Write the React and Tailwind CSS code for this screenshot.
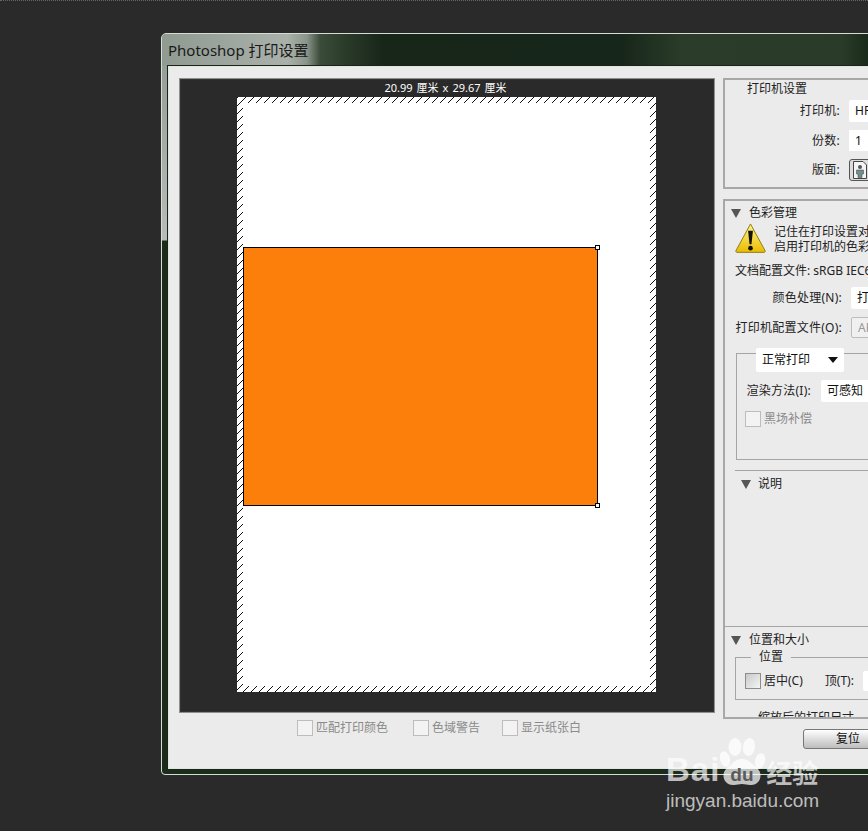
import React from 'react';

const Triangle = ({ className = '' }) => (
  <svg width="10" height="9" viewBox="0 0 10 9" className={className}>
    <path d="M0 0H10L5 9Z" fill="#555" />
  </svg>
);

const Checkbox = ({ label, muted, center }) => (
  <div className="flex items-center gap-[3px]">
    <span className={`h-4 w-4 border ${center ? 'border-[#8d8d8d] bg-gradient-to-br from-[#c9c9c9] to-[#f5f5f5]' : 'border-[#bdbdbd] bg-[#f3f3f3]'}`} />
    <span className={`text-[12px] leading-4 ${muted ? 'text-[#8a8a8a]' : 'text-[#222]'}`}>{label}</span>
  </div>
);

const Row = ({ label, labelWidth, children, className = '' }) => (
  <div className={`flex items-center ${className}`}>
    <span className="text-right text-[12px] tracking-[0.25px] text-[#222] shrink-0 whitespace-nowrap" style={{ width: labelWidth }}>{label}</span>
    {children}
  </div>
);

const Field = ({ children, className = '' }) => (
  <div className={`flex items-center bg-white rounded-[2px] px-[6px] text-[12px] text-[#111] whitespace-nowrap ${className}`}>{children}</div>
);

const WarningIcon = () => (
  <svg width="31" height="31" viewBox="0 0 32 32" className="shrink-0">
    <defs>
      <linearGradient id="warn" x1="0" y1="0" x2="0" y2="1">
        <stop offset="0" stopColor="#fff48a" />
        <stop offset="1" stopColor="#e9bc00" />
      </linearGradient>
    </defs>
    <path d="M16 1 31 28.5a1.2 1.2 0 0 1-1 1.8H2a1.2 1.2 0 0 1-1-1.8Z" fill="url(#warn)" stroke="#8f7a14" />
    <path d="M13.5 8h5l-1.5 14h-2Z" fill="#111" />
    <circle cx="16" cy="26" r="2.4" fill="#111" />
  </svg>
);

const PortraitIcon = () => (
  <svg width="14" height="18" viewBox="0 0 14 18">
    <path d="M.5.5H10L13.5 4V17.5H.5Z" fill="#f4f4f4" stroke="#444" />
    <circle cx="7" cy="6" r="2" fill="#555" />
    <path d="M3.5 9h7v4H9v3.5H5V13H3.5Z" fill="#6f8f8a" stroke="#444" strokeWidth=".5" />
  </svg>
);

const BaiduPaw = () => (
  <svg width="46" height="50" viewBox="0 0 46 50" fill="#fff" fillOpacity=".72">
    <ellipse cx="15" cy="10" rx="6.5" ry="9" />
    <ellipse cx="29" cy="10" rx="6" ry="9" transform="rotate(8 29 10)" />
    <ellipse cx="5" cy="22" rx="5" ry="8" transform="rotate(-15 5 22)" />
    <ellipse cx="40" cy="24" rx="5" ry="8" transform="rotate(15 40 24)" />
    <path d="M22 22c7 0 10 5 15 9 7 6 3 18-7 17-3 0-5-1-8-1s-5 1-8 1C4 49 0 37 7 31c5-4 8-9 15-9Z" />
  </svg>
);

export default function App() {
  return (
    <div className="relative h-[831px] w-[868px] overflow-hidden bg-[#2a2a2a] pl-[161px] pt-[33px] font-['Noto_Sans','Noto_Sans_CJK_SC',sans-serif]">
      <div className="absolute left-0 right-0 top-0 border-t border-dotted border-[#666]" />

      {/* dialog window, runs off the right edge of the shot */}
      <div className="h-[742px] w-[760px] rounded-tl-[5px] rounded-bl-[4px] border border-[#d5dcd5] bg-[linear-gradient(180deg,#8f9a91_0,#b8bcb8_206px,#1c2c1b_207px,#1c2c1b_100%)]">
        <div className="flex h-[32px] items-center rounded-tl-[4px] bg-[linear-gradient(90deg,#8f9a91_0,#aab1aa_125px,#8a958a_145px,#3c4c3a_158px,#2a3a28_185px,#18261a_220px,#17261a_460px,#2b3c2a_520px,#2b3b29_680px,#1a2a1a_706px)] pl-[6px] pt-[1px]">
          <span className="text-[15px] text-[#1a1a1a]">Photoshop 打印设置</span>
        </div>

        <div className="ml-[6px] h-[703px] border border-[#dfe6df] bg-[#ebebeb] outline outline-1 outline-[#1a241a]">
          <div className="flex pl-[10px] pt-[11px]">
            {/* preview */}
            <div className="w-[536px] shrink-0">
              <div className="h-[635px] border border-[#8e8e8e] bg-[#2a2a2a] outline outline-1 -outline-offset-2 outline-[#333]">
                <div className="flex h-[18px] items-center justify-center gap-[4px] pr-[3px] text-[11px] text-white">
                  <span>20.99</span><span>厘米</span><span>x</span><span>29.67</span><span>厘米</span>
                </div>
                <div className="ml-[57px] h-[595px] w-[419px] bg-[repeating-linear-gradient(135deg,#111_0,#111_1px,#fff_1px,#fff_5.66px)] p-[6px]">
                  <div className="h-full bg-white pt-[144px]">
                    <div className="relative h-[259px] w-[355px] border border-black bg-[#fb7f0a]">
                      <span className="absolute -right-[3px] -top-[3px] h-[5px] w-[5px] border border-black bg-white" />
                      <span className="absolute -bottom-[3px] -right-[3px] h-[5px] w-[5px] border border-black bg-white" />
                    </div>
                  </div>
                </div>
              </div>
              <div className="mt-[7px] flex pl-[118px]">
                <Checkbox label="匹配打印颜色" muted />
                <div className="ml-[25px]"><Checkbox label="色域警告" muted /></div>
                <div className="ml-[22px]"><Checkbox label="显示纸张白" muted /></div>
              </div>
            </div>

            {/* settings column */}
            <div className="ml-[8px] w-[200px] shrink-0">
              <div className="h-[111px] border-2 border-[#a8a8a8] border-r-0 pl-[22px] pt-[1px]">
                <div className="text-[12px] leading-[16px] text-[#222]">打印机设置</div>
                <div className="-ml-[22px] mt-[3px] flex flex-col gap-[8px]">
                  <Row label="打印机:" labelWidth={115}><Field className="ml-[9px] h-[22px] w-[120px]">HP LaserJet</Field></Row>
                  <Row label="份数:" labelWidth={115}><Field className="ml-[9px] h-[21px] w-[60px] !rounded-none">1</Field></Row>
                  <Row label="版面:" labelWidth={115}>
                    <div className="ml-[9px] flex h-[22px] w-[22px] items-center justify-center rounded-[3px] border border-[#555] bg-[#dcdcdc]"><PortraitIcon /></div>
                  </Row>
                </div>
              </div>

              <div className="mt-[10px] h-[520px] overflow-hidden border-2 border-[#a8a8a8] border-r-0">
                <div className="flex items-center pl-[6px] pt-[4px]">
                  <Triangle />
                  <span className="ml-[8px] text-[12px] leading-[16px] text-[#222]">色彩管理</span>
                </div>
                <div className="ml-[10px] mt-[2px] flex">
                  <WarningIcon />
                  <div className="ml-[8px] pt-[1px] text-[12px] leading-[15px] text-[#222] whitespace-nowrap">
                    <div>记住在打印设置对话框中</div>
                    <div>启用打印机的色彩管理</div>
                  </div>
                </div>
                <div className="ml-[10px] mt-[9px] text-[12px] leading-[16px] text-[#222] whitespace-nowrap">文档配置文件: sRGB IEC61966-2.1</div>
                <Row label="颜色处理(N):" labelWidth={117} className="mt-[8px]"><Field className="ml-[9px] h-[22px] w-[120px]">打印机管理颜色</Field></Row>
                <Row label="打印机配置文件(O):" labelWidth={117} className="mt-[8px]"><Field className="ml-[9px] h-[21px] w-[120px] border border-[#bdbdbd] !bg-[#f0f0f0] !text-[#999]">APPLE RGB</Field></Row>

                <div className="relative ml-[11px] mt-[15px] h-[107px] border border-[#a5a5a5] border-r-0 pl-[8px] pt-[26px]">
                  <Field className="absolute left-[19px] -top-[6px] h-[24px] w-[88px] justify-between !px-[6px]">
                    <span>正常打印</span>
                    <svg width="10" height="6" viewBox="0 0 10 6"><path d="M0 0H10L5 6Z" fill="#111" /></svg>
                  </Field>
                  <Row label="渲染方法(I):" labelWidth={66}><Field className="ml-[10px] h-[22px] w-[100px]">可感知</Field></Row>
                  <div className="mt-[9px]"><Checkbox label="黑场补偿" muted /></div>
                </div>

                <div className="ml-[10px] mt-[10px] h-[156px] border-t border-[#a5a5a5] pl-[6px] pt-[5px]">
                  <div className="flex items-center">
                    <Triangle />
                    <span className="ml-[7px] text-[12px] leading-[16px] text-[#222]">说明</span>
                  </div>
                </div>

                <div className="border-t border-[#a5a5a5] pl-[6px] pt-[5px]">
                  <div className="flex items-center">
                    <Triangle />
                    <span className="ml-[8px] text-[12px] leading-[16px] text-[#222]">位置和大小</span>
                  </div>
                </div>
                <div className="relative ml-[10px] mt-[9px] h-[43px] border border-[#a5a5a5] border-r-0 pl-[9px] pt-[13px]">
                  <span className="absolute left-[15px] -top-[9px] bg-[#ebebeb] px-[8px] text-[12px] leading-[16px] text-[#222]">位置</span>
                  <div className="flex items-center">
                    <Checkbox label="居中(C)" center />
                    <span className="ml-[22px] text-[12px] text-[#222]">顶(T):</span>
                    <Field className="ml-[9px] h-[20px] w-[50px]">1</Field>
                  </div>
                </div>
                <div className="relative ml-[10px] mt-[18px] h-[20px] border-t border-[#a5a5a5]">
                  <span className="absolute left-[15px] -top-[9px] bg-[#ebebeb] px-[8px] text-[12px] leading-[16px] text-[#222] whitespace-nowrap">缩放后的打印尺寸</span>
                </div>
              </div>

              <div className="ml-[80px] mt-[10px] flex h-[20px] w-[90px] items-center justify-center rounded-[3px] border border-[#777] bg-gradient-to-b from-white to-[#bdbdbd] text-[12px] text-[#111]">复位</div>
            </div>
          </div>
        </div>
      </div>

      {/* watermark */}
      <div className="absolute left-[666px] top-[737px] w-[160px] text-white/70">
        <div className="flex items-end">
          <span className="-mb-[2px] text-[33px] font-bold leading-[38px] tracking-[1px] font-['Liberation_Sans',sans-serif] text-white/70">Bai</span>
          <div className="relative h-[50px] w-[46px] shrink-0">
            <BaiduPaw />
            <span className="absolute bottom-[1px] left-[10px] text-[19px] font-bold leading-[22px] text-[#5a5a5a] font-['Liberation_Sans',sans-serif]">du</span>
          </div>
          <span className="-mb-[2px] text-[26px] font-bold leading-[32px] text-white/70 whitespace-nowrap">经验</span>
        </div>
        <div className="mt-[4px] whitespace-nowrap text-[19px] leading-[20px] font-['Liberation_Sans',sans-serif]">jingyan.baidu.com</div>
      </div>
    </div>
  );
}
